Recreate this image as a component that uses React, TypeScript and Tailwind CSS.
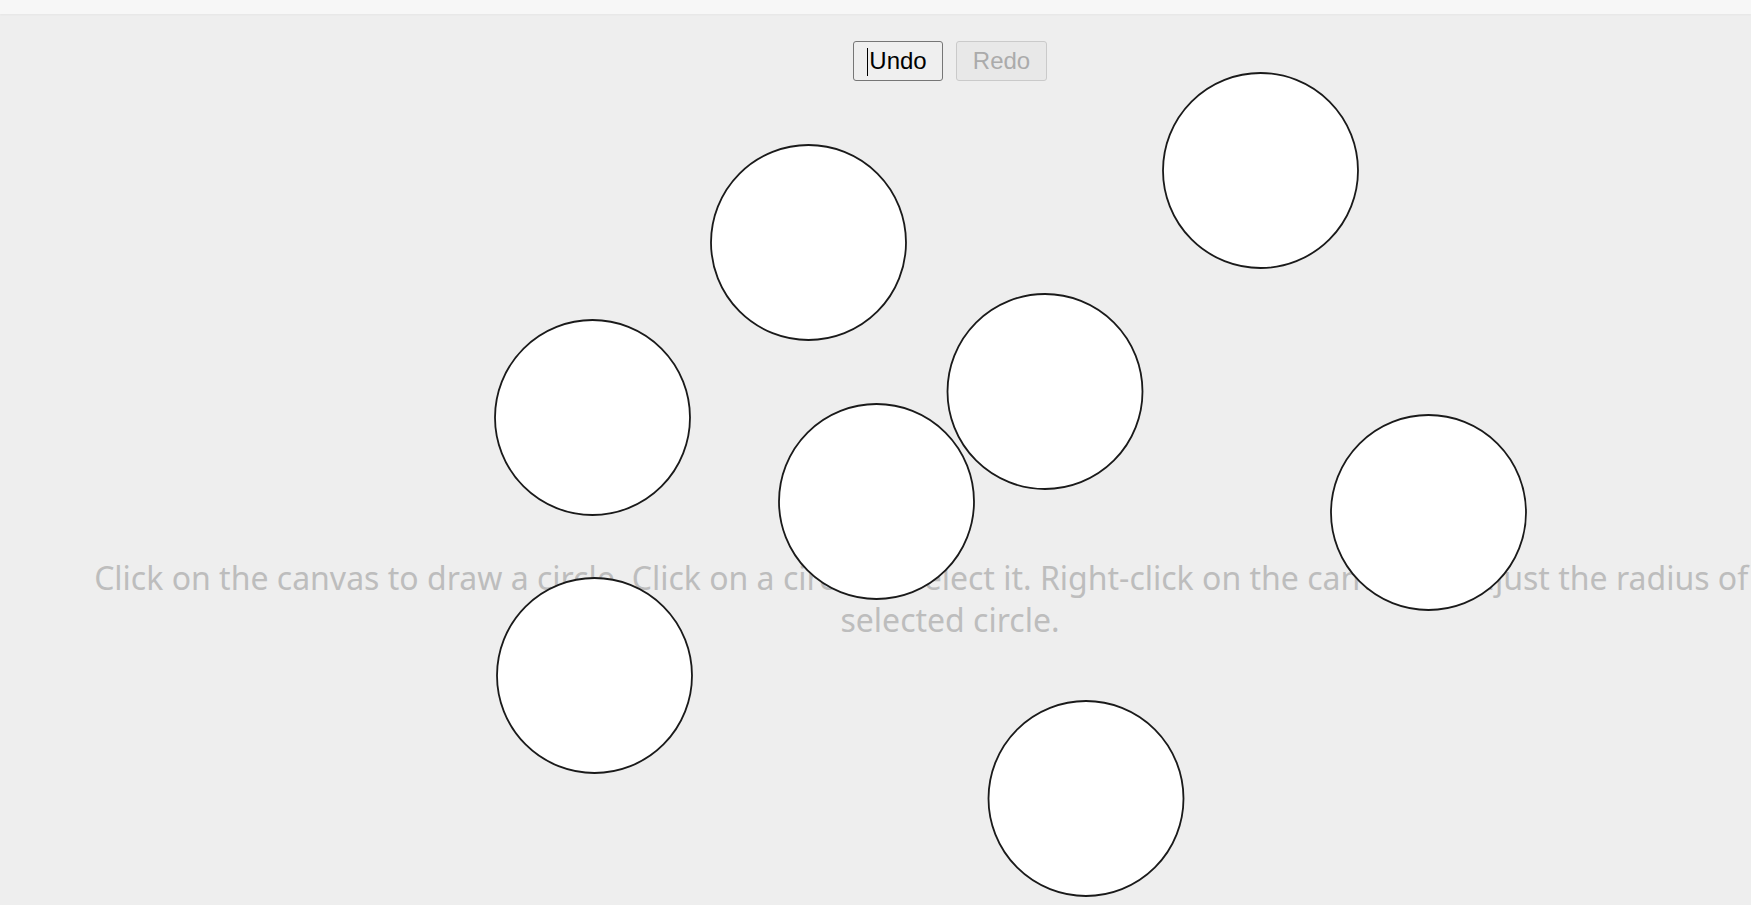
const circles = [
  { x: 808.5, y: 242.5 },
  { x: 1260.5, y: 170.5 },
  { x: 592.5, y: 417.5 },
  { x: 1045, y: 391.5 },
  { x: 876.5, y: 501.5 },
  { x: 1428.5, y: 512.5 },
  { x: 594.5, y: 675.5 },
  { x: 1086, y: 798.5 },
];

export default function App() {
  return (
    <div className="relative w-full h-[905px] overflow-hidden bg-[#eeeeee]">
      {/* top strip */}
      <div className="h-[14px] w-full bg-[#f7f7f7] shadow-[0_1px_2px_rgba(0,0,0,0.04)]" />

      <div className="relative w-[1900px]">
        {/* toolbar */}
        <div className="flex justify-center gap-[13px] pt-[27px] font-['Liberation_Sans',Arial,sans-serif]">
          <button className="relative flex items-center justify-center w-[90px] h-[40px] bg-[#efefef] border border-[#767676] rounded-[3px] text-[24px] text-black leading-none">
            <span className="absolute left-[13px] top-[6px] h-[28px] border-l border-black" />
            Undo
          </button>
          <button
            disabled
            className="flex items-center justify-center w-[91px] h-[40px] bg-[#e8e8e8] border border-[#cacaca] rounded-[3px] text-[24px] text-[#ababab] leading-none"
          >
            Redo
          </button>
        </div>

        {/* hint */}
        <p className="mt-[476px] text-center text-[32px] leading-[42px] text-[#bdbdbd] font-['Noto_Sans','Open_Sans',sans-serif] whitespace-nowrap">
          Click on the canvas to draw a circle. Click on a circle to select it. Right-click on the canvas to adjust the radius of the
          <br />
          selected circle.
        </p>
      </div>

      {/* drawn circles */}
      <svg className="absolute left-0 top-0" width="1751" height="905">
        {circles.map((c, i) => (
          <circle key={i} cx={c.x} cy={c.y} r={97.5} fill="#ffffff" stroke="#1a1a1a" strokeWidth={1.8} />
        ))}
      </svg>
    </div>
  );
}
